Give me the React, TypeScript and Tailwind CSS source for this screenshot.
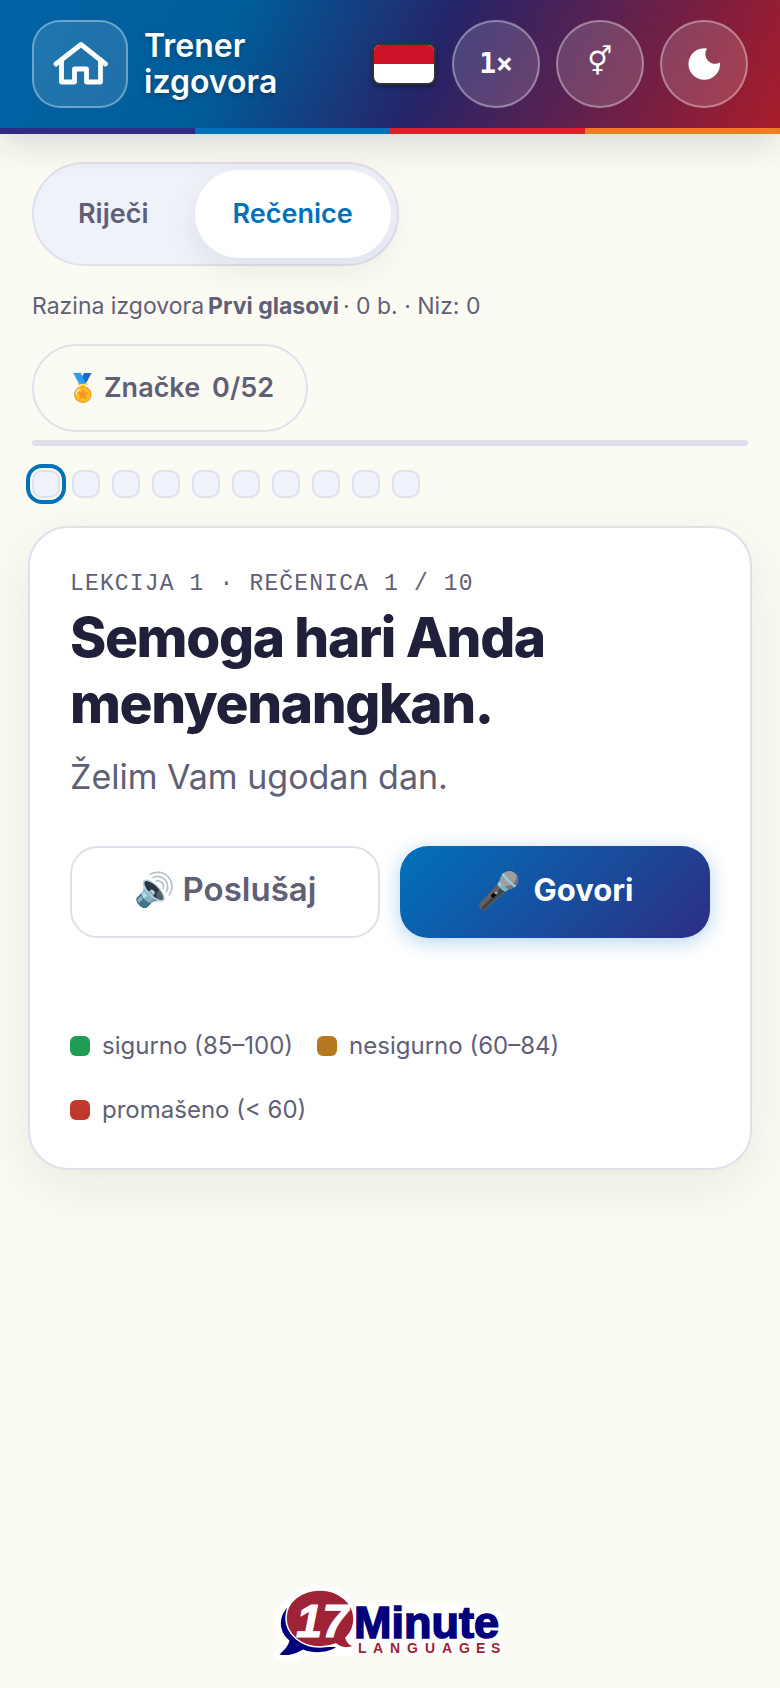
import React, { useState } from "react";

const stripes = ["bg-[#2d2e83]", "bg-[#0072bc]", "bg-[#d8232f]", "bg-[#ef7d21]"];

const legend = [
  { label: "sigurno (85–100)", color: "bg-[#1f9d55]" },
  { label: "nesigurno (60–84)", color: "bg-[#b7791f]" },
  { label: "promašeno (< 60)", color: "bg-[#c0392b]" },
];

const roundButton =
  "flex size-[88px] shrink-0 items-center justify-center rounded-full border-2 border-white/35 bg-white/15 text-white";

const Header = () => (
  <header className="relative z-10 shadow-[0_8px_36px_rgba(26,26,46,0.16)]">
    <div className="flex items-center gap-4 bg-[linear-gradient(115deg,#0064a5_0%,#005c99_30%,#262469_55%,#a81c2a_100%)] px-8 py-5">
      <a
        href="#home"
        aria-label="Početna"
        className="flex h-[88px] w-24 shrink-0 items-center justify-center rounded-[28px] border-2 border-white/35 bg-white/12"
      >
        <svg width="56" height="48" viewBox="0 0 56 48" fill="none" stroke="#fff" strokeWidth="4.8" strokeLinecap="round" strokeLinejoin="round">
          <path d="M4 24 29 4.500 53.500 24" />
          <path d="M9.500 20V42H22.500V29H34.500V42H48.500V20" />
        </svg>
      </a>
      <h1 className="flex-1 text-[32px] leading-9 font-semibold text-white [text-shadow:0_2px_4px_rgba(0,0,0,0.3)]">
        Trener
        <br />
        izgovora
      </h1>
      <button
        aria-label="Indonezijski"
        className="flex h-[42px] w-16 flex-col overflow-hidden rounded-lg border-2 border-black/80 bg-white shadow-[0_2px_4px_rgba(0,0,0,0.35)]"
      >
        <span className="h-1/2 w-full bg-[#ce1126]" />
      </button>
      <button className={`${roundButton} font-['DejaVu_Sans_Mono',monospace] text-[28px] font-bold`}>1×</button>
      <button className={`${roundButton} pb-1 font-['DejaVu_Sans',sans-serif] text-[28px]`} aria-label="Glas">
        ⚥
      </button>
      <button className={roundButton} aria-label="Tamni način">
        <svg width="34" height="34" viewBox="0 0 34 34" fill="#fff">
          <path d="M20 1.500A15.800 15.800 0 1 0 33 15.500 9.800 9.800 0 0 1 20 1.500Z" />
        </svg>
      </button>
    </div>
    <div className="grid h-[6px] grid-cols-4">
      {stripes.map((s) => (
        <span key={s} className={s} />
      ))}
    </div>
  </header>
);

const Logo = () => (
  <svg width="232" height="80" viewBox="0 0 232 80" role="img" aria-label="17 Minute Languages">
    <g fill="#fff" stroke="#fff" strokeWidth="12" strokeLinejoin="round">
      <ellipse cx="46" cy="35" rx="34" ry="28" />
      <path d="M12 24C4 34 5 48 15 56L7 71C16 72 24 69 29 65H224V34L175 25H82Z" />
    </g>
    <path
      d="M13 24C4 34 5 48 15.500 56.500C14 63 10 66 5.500 70.500C16 72.500 23 69 29 65.500C40 70 55 68.500 62 63C35 64 11 50 13 24Z"
      fill="#00007d"
    />
    <path
      d="M46 6C65 6 80 19 80 35C80 43 77 49 72 54C73 58 76 61 81 62C74 65 67 64 62 60C57 62 52 63 46 63C27 63 12 50 12 34C12 18 27 6 46 6Z"
      fill="#9e2336"
      stroke="#fff"
      strokeWidth="1.500"
    />
    <text x="22" y="53" fill="#fff" stroke="#fff" fontFamily="Liberation Sans, sans-serif" fontWeight="700" fontStyle="italic" fontSize="47">
      17
    </text>
    <text x="80" y="54" fill="#00007d" stroke="#00007d" strokeWidth="1.600" fontFamily="Liberation Sans, sans-serif" fontWeight="700" fontSize="45">
      Minute
    </text>
    <g fill="#9e2336" fontFamily="Liberation Sans, sans-serif" fontWeight="700" fontSize="14">
      <text x="84 99 116 133 151 168 185 202 217" y="69">LANGUAGES</text>
    </g>
  </svg>
);

const App = () => {
  const [tab, setTab] = useState("Rečenice");
  const [current, setCurrent] = useState(0);

  return (
    <div className="flex min-h-screen flex-col bg-[#fbfbf3] font-[Inter,sans-serif] text-[#5f6076]">
      <Header />

      <main className="flex flex-1 flex-col items-start px-8 pt-7">
        <div className="flex gap-2 rounded-full border-2 border-[#dfe0ec] bg-[#eff2f9] p-[6px]">
          {["Riječi", "Rečenice"].map((t) => (
            <button
              key={t}
              onClick={() => setTab(t)}
              className={`h-[88px] rounded-full px-[38px] text-[27px] font-semibold ${
                tab === t
                  ? "bg-white text-[#0072bc] shadow-[0_12px_36px_rgba(26,26,46,0.08)]"
                  : ""
              }`}
            >
              {t}
            </button>
          ))}
        </div>

        <p className="mt-6 flex gap-1 text-[23px] leading-8">
          <span>Razina izgovora</span>
          <strong>Prvi glasovi</strong>
          <span>· 0 b. · Niz: 0</span>
        </p>

        <button className="mt-[22px] flex h-[88px] items-center rounded-full border-2 border-[#dfe0ec] px-8 text-[27px] font-semibold">
          <span className="mr-1">🏅</span>
          Značke
          <span className="ml-3">0/52</span>
        </button>

        <div className="mt-2 h-[6px] w-full rounded-full bg-[#dfdfeb]" />

        <div className="mt-6 flex gap-3">
          {Array.from({ length: 10 }, (_, i) => (
            <button
              key={i}
              aria-label={`Rečenica ${i + 1}`}
              onClick={() => setCurrent(i)}
              className={`size-7 rounded-[10px] border-2 border-[#dfe0ec] bg-[#eff2f9] ${
                i === current ? "outline-4 outline-offset-2 outline-[#0072bc]" : ""
              }`}
            />
          ))}
        </div>

        <div className="-mx-1 mt-7 self-stretch rounded-[40px] border-2 border-[#dfe0ec] bg-white px-10 pt-10 pb-[42px] shadow-[0_16px_56px_rgba(26,26,46,0.08)]">
          <p className="font-['Liberation_Mono',monospace] text-[23px] leading-8 tracking-wider uppercase">
            Lekcija 1 · Rečenica 1 / 10
          </p>
          <h2 className="mt-1 text-[55px] leading-[66px] font-extrabold tracking-tight text-[#20203a]">
            Semoga hari Anda menyenangkan.
          </h2>
          <p className="mt-4 text-[34px] leading-[50px]">Želim Vam ugodan dan.</p>

          <div className="mt-11 grid grid-cols-2 gap-5">
            <button className="flex h-[92px] items-center justify-center gap-2 rounded-[28px] border-2 border-[#dfe0ec] pb-1 text-[33px] font-semibold">
              <span>🔊</span>
              Poslušaj
            </button>
            <button className="flex h-[92px] items-center justify-center gap-3 rounded-[28px] bg-[linear-gradient(135deg,#0072bc,#2d2e83)] pb-1 text-[31px] font-bold text-white shadow-[0_4px_20px_rgba(0,114,188,0.3)]">
              <span className="text-[36px]">🎤</span>
              Govori
            </button>
          </div>

          <ul className="mt-[92px] flex flex-wrap gap-x-6 gap-y-8 text-[24px] leading-8">
            {legend.map((l) => (
              <li key={l.label} className="flex items-center gap-3">
                <span className={`size-5 rounded-md ${l.color}`} />
                {l.label}
              </li>
            ))}
          </ul>
        </div>
      </main>

      <footer className="flex justify-center pb-6">
        <a href="#languages">
          <Logo />
        </a>
      </footer>
    </div>
  );
};

export default App;
